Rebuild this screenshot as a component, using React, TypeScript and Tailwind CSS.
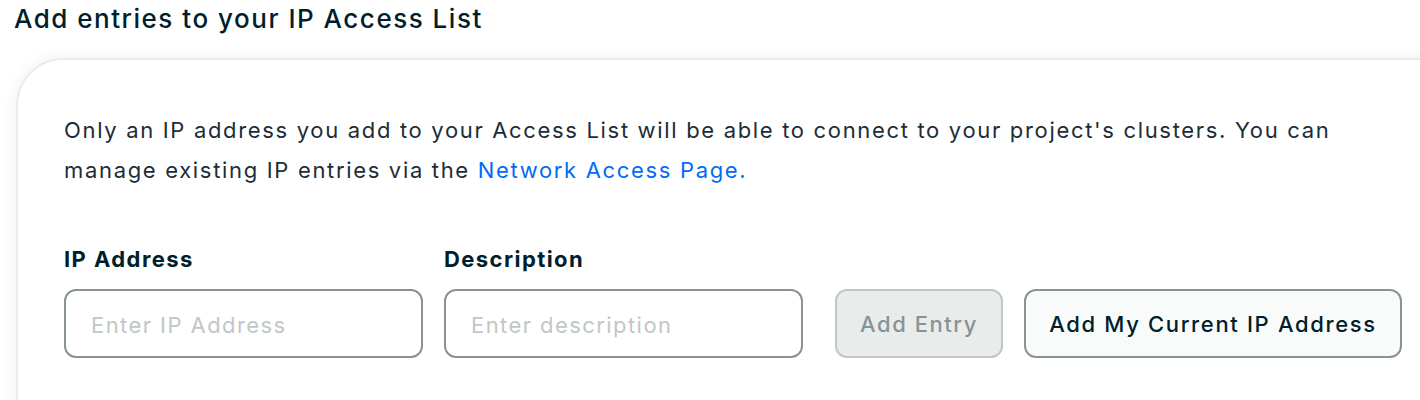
import React from 'react';

const font = { fontFamily: 'Inter, "Noto Sans", sans-serif' };

const Field: React.FC<{ label: string; placeholder: string }> = ({ label, placeholder }) => (
  <div className="flex flex-col gap-[15px]">
    <label className="text-[22px] leading-[30px] font-bold tracking-[0.065em] text-[#001e2b]">{label}</label>
    <input
      placeholder={placeholder}
      className="w-[359px] h-[69px] rounded-[12px] border-2 border-[#889397] bg-white px-[25px] pt-[2px] text-[22px] tracking-[0.065em] text-[#001e2b] placeholder:text-[#c1c7c6] outline-none"
    />
  </div>
);

export default function App() {
  return (
    <div className="w-[1420px] h-[400px] overflow-hidden bg-white" style={font}>
      <h1 className="pl-[14px] pt-[2px] text-[26px] leading-[34px] font-medium tracking-[0.058em] text-[#001e2b]">
        Add entries to your IP Access List
      </h1>
      <div className="ml-4 mt-[22px] w-[1440px] h-[400px] rounded-tl-[48px] border-2 border-[#e8edeb] bg-white pl-[46px] pt-[50px] shadow-[0_0_16px_rgba(0,30,43,0.07)]">
        <p className="w-[1320px] text-[22px] leading-[40px] tracking-[0.076em] text-[#1c2d38]">
          Only an IP address you add to your Access List will be able to connect to your project's clusters. You can
          manage existing IP entries via the <a className="text-[#016bf8]">Network Access Page.</a>
        </p>
        <div className="mt-[54px] flex items-end">
          <div className="flex gap-[21px]">
            <Field label="IP Address" placeholder="Enter IP Address" />
            <Field label="Description" placeholder="Enter description" />
          </div>
          <button
            disabled
            className="ml-8 w-[168px] h-[69px] rounded-[12px] border-2 border-[#c1c7c6] bg-[#e8edeb] pt-[2px] text-[22px] font-medium tracking-[0.07em] text-[#889397]"
          >
            Add Entry
          </button>
          <button className="ml-[21px] w-[378px] h-[69px] rounded-[12px] border-2 border-[#889397] bg-[#f9fbfa] pt-[2px] text-[22px] font-medium tracking-[0.075em] text-[#001e2b]">
            Add My Current IP Address
          </button>
        </div>
      </div>
    </div>
  );
}
